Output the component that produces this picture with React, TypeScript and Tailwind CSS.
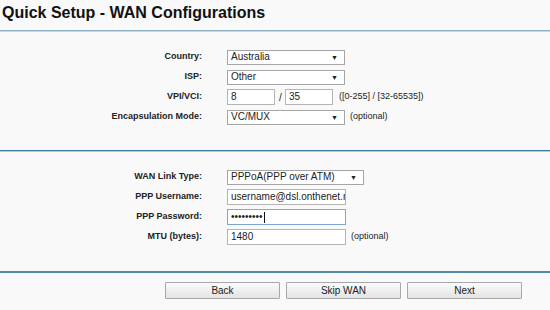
const font = { fontFamily: '"Liberation Sans", Arial, sans-serif' }

function Select({ value, width }: { value: string; width: string }) {
  return (
    <div className={`flex h-[15px] items-center justify-between border border-[#a5a5a5] bg-white pl-[3px] pr-[6px] text-[10px] leading-none text-[#222] ${width}`}>
      <span>{value}</span>
      <span className="text-[7px]">▼</span>
    </div>
  )
}

function Input({ value, width, focused }: { value: React.ReactNode; width: string; focused?: boolean }) {
  return (
    <div
      className={`flex h-[16px] items-center overflow-hidden whitespace-nowrap bg-white pl-[3px] text-[10px] leading-none text-[#222] ${width} ${
        focused ? 'border border-[#7fa6d4]' : 'border border-[#b5b5b5]'
      }`}
    >
      {value}
    </div>
  )
}

function Row({ label, children }: { label: string; children: React.ReactNode }) {
  return (
    <div className="flex h-[20px] items-center">
      <div className="w-[203px] pr-px text-right text-[9px] font-bold text-[#222]">{label}</div>
      <div className="ml-[24px] flex items-center">{children}</div>
    </div>
  )
}

function Button({ label }: { label: string }) {
  return (
    <button className="h-[17px] w-[115px] rounded-[1px] border border-[#a8a8a8] bg-gradient-to-b from-[#fbfbfb] to-[#e3e3e3] text-[10px] leading-none text-[#222]">
      {label}
    </button>
  )
}

export default function App() {
  return (
    <div className="h-[310px] w-[550px] overflow-hidden bg-[#f9f9f9]" style={font}>
      <h1 className="h-[30px] pl-[2px] pt-[3px] text-[16px] font-bold leading-[20px] text-[#111]">
        Quick Setup - WAN Configurations
      </h1>
      <div className="h-px bg-[#8fb2c6]" />
      <div className="h-px bg-[#c3d7e2]" />

      <div className="pt-[15px]">
        <Row label="Country:">
          <Select value="Australia" width="w-[118px]" />
        </Row>
        <Row label="ISP:">
          <Select value="Other" width="w-[118px]" />
        </Row>
        <Row label="VPI/VCI:">
          <Input value="8" width="w-[48px]" />
          <span className="ml-[4px] w-[6px] text-[10px] text-[#222]">/</span>
          <Input value="35" width="w-[48px]" />
          <span className="ml-[6px] text-[9px] text-[#222]">([0-255] / [32-65535])</span>
        </Row>
        <Row label="Encapsulation Mode:">
          <Select value="VC/MUX" width="w-[118px]" />
          <span className="ml-[5px] text-[9px] text-[#222]">(optional)</span>
        </Row>
      </div>

      <div className="mt-[23px] h-px bg-[#3f7c9c]" />
      <div className="h-px bg-[#a9cbe0]" />

      <div className="pt-[15px]">
        <Row label="WAN Link Type:">
          <Select value="PPPoA(PPP over ATM)" width="w-[137px]" />
        </Row>
        <Row label="PPP Username:">
          <Input value="username@dsl.onthenet.r" width="w-[119px]" />
        </Row>
        <Row label="PPP Password:">
          <Input
            focused
            width="w-[119px]"
            value={
              <>
                <span className="text-[10px]">•••••••••</span>
                <span className="ml-px h-[11px] w-px bg-[#111]" />
              </>
            }
          />
        </Row>
        <Row label="MTU (bytes):">
          <Input value="1480" width="w-[119px]" />
          <span className="ml-[5px] text-[9px] text-[#222]">(optional)</span>
        </Row>
      </div>

      <div className="mt-[24px] h-[2px] bg-[#4f8aa8]" />

      <div className="flex gap-[6px] pl-[165px] pt-[9px]">
        <Button label="Back" />
        <Button label="Skip WAN" />
        <Button label="Next" />
      </div>
    </div>
  )
}
